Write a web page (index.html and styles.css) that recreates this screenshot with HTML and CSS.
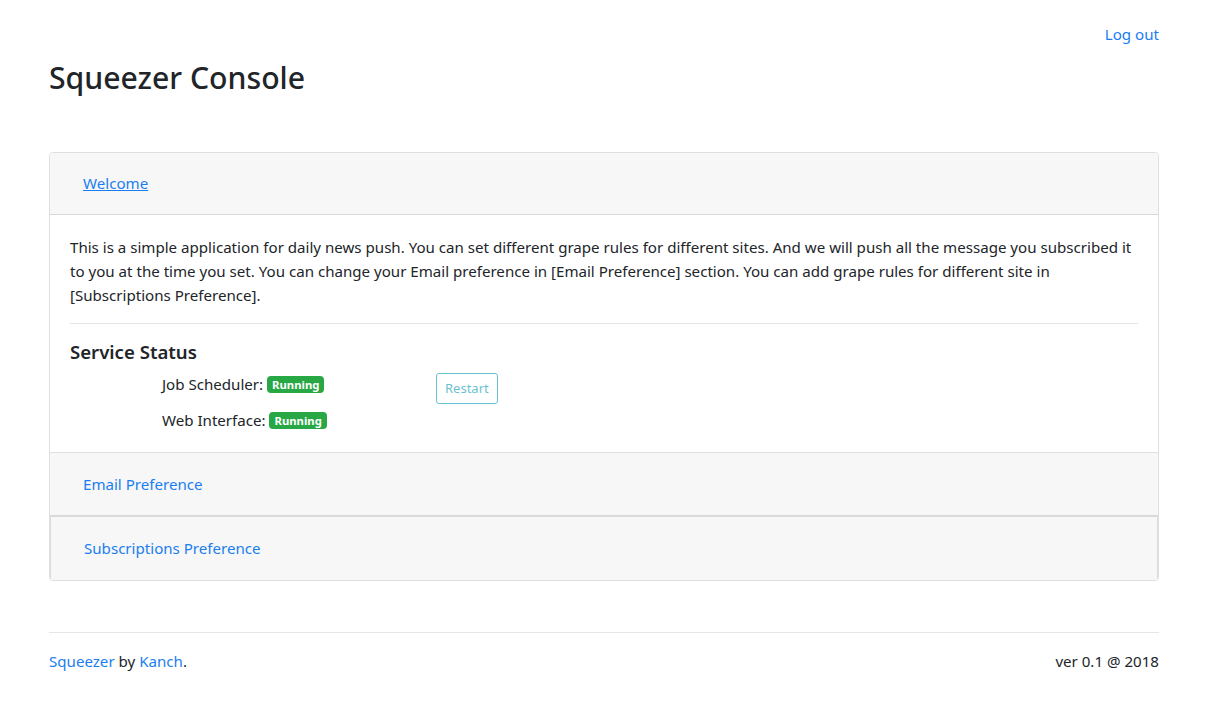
FILE: index.html
```html
<!DOCTYPE html>
<html lang="en">
<head>
<meta charset="utf-8">
<title>Squeezer Console</title>
<link rel="stylesheet" href="styles.css">
</head>
<body>
<div class="container">
  <div class="topbar"><a href="#" class="link">Log out</a></div>
  <h2 class="title">Squeezer Console</h2>

  <div class="accordion">
    <div class="card-header card-header-first"><a href="#" class="btn-link underline">Welcome</a></div>
    <div class="card-body">
      <p class="intro">This is a simple application for daily news push. You can set different grape rules for different sites. And we will push all the message you subscribed it to you at the time you set. You can change your Email preference in [Email Preference] section. You can add grape rules for different site in [Subscriptions Preference].</p>
      <hr class="divider">
      <h5 class="section-title">Service Status</h5>
      <div class="status-row">
        <div class="status-list">
          <div class="status-item">Job Scheduler: <span class="badge">Running</span></div>
          <div class="status-item">Web Interface: <span class="badge">Running</span></div>
        </div>
        <div class="status-action">
          <button class="btn-restart" disabled>Restart</button>
        </div>
      </div>
    </div>
    <div class="card-header"><a href="#" class="btn-link">Email Preference</a></div>
    <div class="card-header card-header-inset"><a href="#" class="btn-link">Subscriptions Preference</a></div>
  </div>

  <footer class="footer">
    <div><a href="#" class="link">Squeezer</a> by <a href="#" class="link">Kanch</a>.</div>
    <div>ver 0.1 @ 2018</div>
  </footer>
</div>
</body>
</html>
```

FILE: styles.css
```css
* { box-sizing: border-box; }
html, body { margin: 0; padding: 0; background: #fff; }
body {
  font-family: "Noto Sans", "Open Sans", sans-serif;
  font-size: 15.1px;
  line-height: 24px;
  color: #212529;
}
.container {
  width: 1110px;
  margin: 0 0 0 49px;
  display: flex;
  flex-direction: column;
}
.link, .btn-link { color: #1a7ef0; text-decoration: none; }
.topbar {
  display: flex;
  justify-content: flex-end;
  padding-top: 22px;
}
.title {
  margin: 13px 0 55px;
  font-size: 30.2px;
  font-weight: 500;
  line-height: 38px;
}
.accordion {
  border: 1px solid rgba(0,0,0,.125);
  border-radius: 4px;
  overflow: hidden;
}
.card-header {
  background: #f7f7f7;
  padding: 12px 20px;
  border-bottom: 1px solid rgba(0,0,0,.125);
  height: 63px;
}
.card-header-first {
  height: 62px;
  padding-top: 11px;
}
.card-header:last-child { border-bottom: 0; }
.btn-link {
  display: inline-block;
  padding: 7px 13px;
  line-height: 24px;
}
.underline { text-decoration: underline; }
.card-header-inset {
  border: 1px solid #dcdcdc;
  border-bottom: 2px solid #dcdcdc;
  height: 64px;
  padding-top: 12px;
}
.card-body {
  padding: 20px;
  border-bottom: 1px solid rgba(0,0,0,.125);
}
.intro { margin: 0; }
.divider {
  margin: 16px 0;
  border: 0;
  border-top: 1px solid rgba(0,0,0,.1);
}
.section-title {
  margin: 0 0 8px;
  font-size: 18.6px;
  font-weight: 600;
  line-height: 24px;
}
.status-row {
  display: flex;
  padding-left: 92px;
}
.status-list {
  width: 274px;
  display: flex;
  flex-direction: column;
  gap: 12px;
}
.status-action { padding-top: 1px; }
.badge {
  display: inline-block;
  background: #28a745;
  color: #fff;
  font-size: 11.3px;
  font-weight: 700;
  line-height: 12px;
  padding: 3px 5px 2px;
  border-radius: 4px;
  vertical-align: 1px;
}
.btn-restart {
  font-family: inherit;
  font-size: 13px;
  line-height: 21px;
  padding: 4px 8px;
  color: #17a2b8;
  background: transparent;
  border: 1px solid #17a2b8;
  border-radius: 3px;
  opacity: .65;
}
.footer {
  margin-top: 51px;
  border-top: 1px solid #e6e6e6;
  padding-top: 16px;
  display: flex;
  justify-content: space-between;
}
```
